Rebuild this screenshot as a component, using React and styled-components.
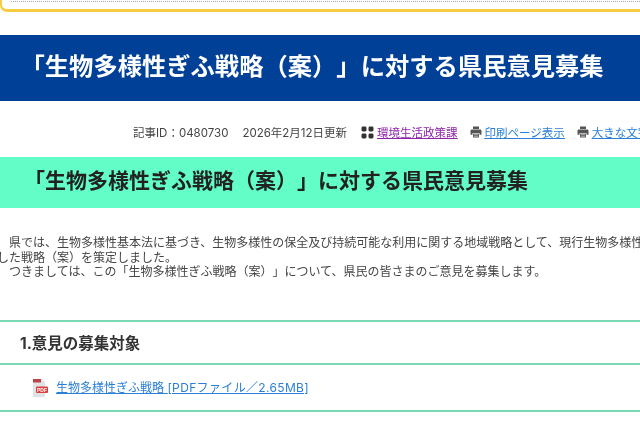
import React from "react";
import styled, { createGlobalStyle } from "styled-components";

const Global = createGlobalStyle`
  html, body { margin: 0; padding: 0; background: #fff; }
  body { width: 640px; height: 422px; overflow: hidden; font-family: Inter, "Noto Sans CJK JP", "Noto Sans", sans-serif; color: #333; text-spacing-trim: space-all; font-feature-settings: "palt" 0; }
`;
const Page = styled.div`
  width: 640px; height: 422px; overflow: hidden; display: flex; flex-direction: column; filter: blur(0.35px);
`;
const Notice = styled.div`
  height: 8px; margin-right: -12px; padding-top: 1px; flex: none; box-sizing: content-box;
  border-bottom: 3px solid #f6cd45; border-left: 2px solid #f6cd45; border-bottom-left-radius: 7px;
  &::before { content: ""; display: block; margin-left: 9px; border-top: 1px dotted #aaa; }
`;
const Banner = styled.div`
  margin-top: 23px; height: 66px; flex: none; background: #004097; display: flex; align-items: center;
  padding: 0 0 8px 20.5px; box-sizing: border-box; color: #fff; font-weight: 700; font-size: 24.3px; white-space: nowrap;
`;
const Meta = styled.div`
  height: 56px; flex: none; display: flex; align-items: center; padding-left: 133px; font-size: 11.5px;
  color: #444; white-space: nowrap; padding-top: 5px; box-sizing: border-box;
`;
const MetaText = styled.span`margin-right: ${p => p.$gap}px;`;
const MetaLink = styled.a`
  display: inline-flex; align-items: center; gap: 3px; margin-right: ${p => p.$gap}px;
  color: ${p => (p.$visited ? "#8e24aa" : "#2a7fd6")}; text-decoration: underline;
  svg { flex: none; margin-top: 1px; }
  span { text-decoration: underline; }
`;
const PageTitle = styled.h1`
  margin: 0; height: 51px; flex: none; background: #63fdc8; display: flex; align-items: center;
  padding: 0 0 8px 24px; box-sizing: border-box; font-size: 21px; font-weight: 700; color: #222; white-space: nowrap;
`;
const Body = styled.div`
  margin: 28px 0 0 -3px; font-size: 12px; line-height: 14.7px; white-space: nowrap; color: #444; flex: none;
`;
const Section = styled.h2`
  margin: 0; margin-top: 40px; height: 39px; box-sizing: content-box; flex: none;
  border-top: 2px solid #7bd8b4; border-bottom: 2px solid #7bd8b4;
  display: flex; align-items: center; padding: 0 0 2px 20px; font-size: 15.5px; font-weight: 700; color: #333; white-space: nowrap;
`;
const Files = styled.div`
  height: 45px; flex: none; border-bottom: 2px solid #7bd8b4; display: flex; align-items: center; padding-left: 33px; gap: 8px;
`;
const FileLink = styled.a`
  font-size: 12px; color: #2a7fd6; text-decoration: underline; white-space: nowrap; margin-top: -2px;
`;
const FileInfo = styled.span`letter-spacing: 0.35px;`;

const Grid = () => (
  <svg width="13" height="13" viewBox="0 0 13 13" fill="#333">
    <rect x="0.5" y="0.5" width="5" height="5" rx="1.4" />
    <rect x="7.5" y="0.5" width="5" height="5" rx="1.4" />
    <rect x="0.5" y="7.5" width="5" height="5" rx="1.4" />
    <rect x="7.5" y="7.5" width="5" height="5" rx="1.4" />
  </svg>
);
const Printer = () => (
  <svg width="12" height="12" viewBox="0 0 12 12">
    <path fill="#555" d="M3 0.5h6v2.5H3zM1.8 3.5h8.4c.8 0 1.3.6 1.3 1.3V8.7H9.5V7h-7v1.7H.5V4.8c0-.7.5-1.3 1.3-1.3z" />
    <path fill="#555" d="M3 7.6h6v3.9H3z" />
    <path fill="#ddd" d="M3.8 8.4h4.4v.7H3.8zM3.8 9.7h4.4v.7H3.8z" />
  </svg>
);
const Pdf = () => (
  <svg width="15" height="18" viewBox="0 0 15 18">
    <path fill="#dfe3e6" d="M0 0h9l3 3v15H0z" />
    <rect x="0" y="0" width="8" height="3.5" fill="#b9444a" />
    <rect x="3" y="7.5" width="12" height="6.5" rx="1" fill="#dc3d3d" />
    <text x="9" y="12.6" fontSize="5" fontWeight="700" textAnchor="middle" fill="#fff" fontFamily="Liberation Sans, sans-serif">PDF</text>
  </svg>
);

export default function App() {
  return (
    <>
      <Global />
      <Page>
        <Notice />
        <Banner>「生物多様性ぎふ戦略（案）」に対する県民意見募集</Banner>
        <Meta>
          <MetaText $gap={14}>記事ID：0480730</MetaText>
          <MetaText $gap={14}>2026年2月12日更新</MetaText>
          <MetaLink href="#" $visited $gap={12}><Grid /><span>環境生活政策課</span></MetaLink>
          <MetaLink href="#" $gap={12}><Printer /><span>印刷ページ表示</span></MetaLink>
          <MetaLink href="#" $gap={0}><Printer /><span>大きな文字で印刷ページ表示</span></MetaLink>
        </Meta>
        <PageTitle>「生物多様性ぎふ戦略（案）」に対する県民意見募集</PageTitle>
        <Body>
          {"\u3000県では、生物多様性基本法に基づき、生物多様性の保全及び持続可能な利用に関する地域戦略として、現行生物多様性"}<br />
          した戦略（案）を策定しました。<br />
          {"\u3000つきましては、この「生物多様性ぎふ戦略（案）」について、県民の皆さまのご意見を募集します。"}
        </Body>
        <Section>1.意見の募集対象</Section>
        <Files>
          <Pdf />
          <FileLink href="#">生物多様性ぎふ戦略 <FileInfo>[PDFファイル／2.65MB]</FileInfo></FileLink>
        </Files>
      </Page>
    </>
  );
}
